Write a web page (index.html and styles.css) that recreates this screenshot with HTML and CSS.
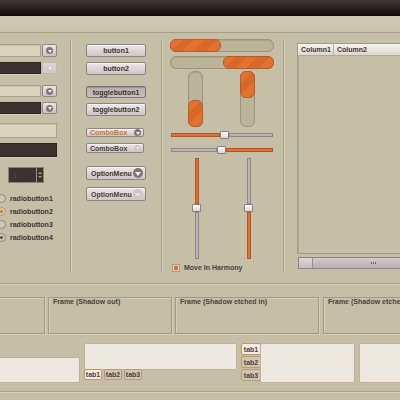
FILE: index.html
```html
<!DOCTYPE html>
<html lang="en">

<head>
    <meta charset="UTF-8">
    <title>Theme Preview</title>
    <link rel="stylesheet" href="styles.css">
</head>

<body>
    <div class="titlebar"></div>
    <div class="toolbar"></div>

    <div class="main">
        <!-- entries, combos, spin, radios -->
        <div class="col col-entries">
            <div class="combo combo-a"><div class="entry"></div><div class="combo-btn"><span class="arrow"></span></div></div>
            <div class="combo combo-b"><div class="entry dark"></div><div class="combo-btn off"><span class="arrow"></span></div></div>
            <div class="combo combo-c"><div class="entry"></div><div class="combo-btn"><span class="arrow"></span></div></div>
            <div class="combo combo-d"><div class="entry dark"></div><div class="combo-btn"><span class="arrow"></span></div></div>
            <div class="entry wide entry-e"></div>
            <div class="entry wide dark entry-f"></div>
            <div class="spin"><span class="spin-val">1</span><span class="spin-arrows"><i class="up"></i><i class="down"></i></span></div>
            <div class="radios">
                <div class="radio"><span class="dot"></span>radiobutton1</div>
                <div class="radio"><span class="dot on"></span>radiobutton2</div>
                <div class="radio"><span class="dot"></span>radiobutton3</div>
                <div class="radio"><span class="dot on dim"></span>radiobutton4</div>
            </div>
        </div>
        <div class="sep"></div>

        <!-- buttons -->
        <div class="col col-buttons">
            <div class="btn b1">button1</div>
            <div class="btn b2">button2</div>
            <div class="btn pressed b3">togglebutton1</div>
            <div class="btn b4">togglebutton2</div>
            <div class="btn combobox cb1"><span class="hot">ComboBox</span><span class="arrow"></span></div>
            <div class="btn combobox cb2"><span>ComboBox</span><span class="arrow off"></span></div>
            <div class="btn optmenu om1"><span>OptionMenu</span><span class="arrow big"></span></div>
            <div class="btn optmenu om2"><span>OptionMenu</span><span class="arrow big off"></span></div>
        </div>
        <div class="sep"></div>

        <!-- progress bars and scales -->
        <div class="col col-ranges">
            <div class="pbar pb1"><div class="fill" style="width: 50%"></div></div>
            <div class="pbar pb2"><div class="fill" style="width: 50%"></div></div>
            <div class="vbars">
                <div class="pbar vertical"><div class="fill" style="height: 50%"></div></div>
                <div class="pbar vertical top"><div class="fill" style="height: 50%"></div></div>
            </div>
            <div class="hscale hs1">
                <div class="track orange" style="width: 49px"></div><div class="knob"></div><div class="track"></div>
            </div>
            <div class="hscale hs2">
                <div class="track" style="width: 46px"></div><div class="knob"></div><div class="track orange"></div>
            </div>
            <div class="vscales">
                <div class="vscale">
                    <div class="track orange" style="height: 46px"></div><div class="knob"></div><div class="track"></div>
                </div>
                <div class="vscale">
                    <div class="track" style="height: 46px"></div><div class="knob"></div><div class="track orange"></div>
                </div>
            </div>
            <div class="check"><span class="box"></span>Move In Harmony</div>
        </div>
        <div class="sep"></div>

        <!-- tree view -->
        <div class="col col-tree">
            <div class="tree">
                <div class="tree-head"><span class="colh c1">Column1</span><span class="colh">Column2</span></div>
            </div>
            <div class="scrollbar"><span class="stepper"></span><span class="slider"><span class="grip"></span></span></div>
        </div>
    </div>

    <div class="hline"></div>

    <div class="frames">
        <div class="frame f1"></div>
        <div class="frame f2"><span class="frame-label">Frame (Shadow out)</span></div>
        <div class="frame f3"><span class="frame-label">Frame (Shadow etched in)</span></div>
        <div class="frame f4"><span class="frame-label">Frame (Shadow etched out)</span></div>
    </div>

    <div class="notebooks">
        <div class="nb nb-top">
            <div class="tabs"></div>
            <div class="page"></div>
        </div>
        <div class="nb nb-bottom">
            <div class="page"></div>
            <div class="tabs"><span class="tab active">tab1</span><span class="tab">tab2</span><span class="tab">tab3</span></div>
        </div>
        <div class="nb nb-left">
            <div class="tabs"><span class="tab active">tab1</span><span class="tab">tab2</span><span class="tab">tab3</span></div>
            <div class="page"></div>
        </div>
        <div class="nb nb-right">
            <div class="page"></div>
        </div>
    </div>

    <div class="hline bottom"></div>
</body>

</html>
```

FILE: styles.css
```css
/* Reset */
* {
    margin: 0;
    padding: 0;
    box-sizing: border-box;
}

body {
    width: 400px;
    height: 400px;
    overflow: hidden;
    background-color: #c6bfa7;
    font-family: 'Liberation Sans', Arial, sans-serif;
    font-size: 7px;
    font-weight: bold;
    color: #3d3434;
    line-height: 1;
}

/* Window title + toolbar band */
.titlebar {
    height: 16px;
    background: linear-gradient(#423935, #0e0a09);
}

.toolbar {
    height: 17px;
    background: linear-gradient(#d0cab4, #c9c3ac);
    border-bottom: 1px solid #a69e83;
}

/* Main four columns */
.main {
    display: flex;
    height: 250px;
}

.col {
    display: flex;
    flex-direction: column;
    overflow: hidden;
}

.sep {
    width: 2px;
    margin: 7px 0 10px;
    border-left: 1px solid #aaa288;
    border-right: 1px solid #d6d0bb;
}

/* Column 1: entries */
.col-entries {
    width: 70px;
    align-items: flex-end;
    padding-right: 13px;
}

.combo {
    display: flex;
    gap: 1px;
    height: 12px;
    margin-top: 5px;
}

.combo-a {
    margin-top: 11px;
    height: 13px;
}

.combo-c {
    margin-top: 11px;
}

.entry {
    width: 90px;
    height: 100%;
    background-color: #dad4be;
    border: 1px solid #a9a188;
    box-shadow: inset 0 1px 0 #c9c2ab;
}

.entry.dark {
    background-color: #3c322f;
    border-color: #2b2320;
    box-shadow: 0 1px 0 #d6d0bb;
}

.entry.wide {
    width: 120px;
}

.entry-e {
    height: 15px;
    margin-top: 9px;
}

.entry-f {
    height: 14px;
    margin-top: 5px;
}

.combo-btn {
    width: 15px;
    height: 100%;
    display: flex;
    align-items: center;
    justify-content: center;
    background: linear-gradient(#ebe6e4, #cbc2c2);
    border: 1px solid #918686;
    border-radius: 2px;
}

.combo-btn.off {
    background: linear-gradient(#dcd6d4, #d0c9c8);
    border-color: #c0b8b6;
}

.combo-btn.off .arrow {
    background-color: #d4c9c8;
}

/* Round arrow glyph */
.arrow {
    width: 7px;
    height: 7px;
    border-radius: 50%;
    background-color: #807575;
    display: flex;
    align-items: center;
    justify-content: center;
    flex-shrink: 0;
}

.arrow::after {
    content: '';
    margin-top: 1px;
    border-left: 2px solid transparent;
    border-right: 2px solid transparent;
    border-top: 3px solid #f4f0ef;
}

.arrow.big {
    width: 10px;
    height: 10px;
}

.arrow.big::after {
    border-left-width: 3px;
    border-right-width: 3px;
    border-top-width: 4px;
}

.arrow.off {
    background-color: #d2c6c5;
}

.arrow.off::after {
    border-top-color: #e6dfde;
}

/* Spin button */
.spin {
    align-self: flex-start;
    display: flex;
    width: 36px;
    height: 16px;
    margin: 10px 0 0 8px;
    background-color: #3c322f;
    border: 1px solid #8b836c;
}

.spin-val {
    flex: 1;
    padding: 4px 0 0 4px;
    color: #5e5450;
    font-weight: normal;
}

.spin-arrows {
    width: 7px;
    display: flex;
    flex-direction: column;
    justify-content: center;
    align-items: center;
    gap: 2px;
    border-left: 1px solid #9a917c;
}

.spin-arrows i {
    border-left: 2px solid transparent;
    border-right: 2px solid transparent;
}

.spin-arrows .up {
    border-bottom: 2px solid #a89f90;
}

.spin-arrows .down {
    border-top: 2px solid #a89f90;
}

/* Radios */
.radios {
    align-self: flex-start;
    margin: 9px 0 0 -3px;
}

.radio {
    display: flex;
    align-items: center;
    gap: 4px;
    height: 13px;
}

.dot {
    width: 9px;
    height: 9px;
    border-radius: 50%;
    border: 1px solid #8f8584;
    background-color: #d0cab4;
    display: flex;
    align-items: center;
    justify-content: center;
}

.dot.on {
    border-color: #c98d63;
}

.dot.on::after {
    content: '';
    width: 3px;
    height: 3px;
    border-radius: 50%;
    background-color: #d8702e;
}

.dot.dim {
    border-color: #8f8584;
}

.dot.dim::after {
    background-color: #564b4a;
}

/* Column 2: buttons */
.col-buttons {
    width: 89px;
    padding-left: 14px;
}

.btn {
    width: 60px;
    height: 13px;
    display: flex;
    align-items: center;
    justify-content: center;
    background: linear-gradient(#ece7e5, #cfc6c6);
    border: 1px solid #8f8484;
    border-radius: 2px;
    box-shadow: inset 0 1px 0 #f7f4f3;
}

.btn.pressed {
    background: linear-gradient(#b9afb0, #c9c0c0);
    border-color: #7d7272;
    box-shadow: inset 0 1px 1px #9a8f90;
}

.b1 { margin-top: 11px; }
.b2 { margin-top: 5px; }
.b3 { margin-top: 11px; height: 12px; }
.b4 { margin-top: 5px; }

.combobox,
.optmenu {
    justify-content: space-between;
    padding: 0 2px 0 3px;
}

.combobox {
    width: 58px;
    height: 10px;
}

.cb1 { margin-top: 12px; height: 9px; }
.cb2 { margin-top: 6px; }

.hot {
    color: #c8733a;
}

.optmenu {
    height: 14px;
    padding-left: 4px;
}

.om1 { margin-top: 13px; }
.om2 { margin-top: 7px; }

.cb2 span:first-child,
.om2 span:first-child {
    color: #4a4040;
}

/* Column 3: progress bars and scales */
.col-ranges {
    width: 120px;
    padding-left: 7px;
}

.pbar {
    display: flex;
    width: 104px;
    height: 13px;
    background-color: #bbb499;
    border: 1px solid #9c957b;
    border-radius: 6px;
    box-shadow: inset 0 1px 1px #a9a288;
}

.pb1 { margin-top: 6px; }
.pb2 { margin-top: 4px; justify-content: flex-end; }

.fill {
    background: repeating-linear-gradient(135deg, #e3722f 0 8px, #d8672a 8px 16px);
    border: 1px solid #b95a27;
    border-radius: 6px;
    margin: -1px;
}

.vbars {
    display: flex;
    gap: 37px;
    margin: 2px 0 0 18px;
}

.pbar.vertical {
    flex-direction: column;
    justify-content: flex-end;
    width: 15px;
    height: 56px;
}

.pbar.vertical.top {
    justify-content: flex-start;
}

.hscale {
    display: flex;
    align-items: center;
    width: 102px;
    height: 9px;
    margin-left: 1px;
}

.hs1 { margin-top: 3px; }
.hs2 { margin-top: 6px; }

.hscale .track {
    height: 4px;
}

.track {
    flex: 1 1 0;
    background-color: #bdb4b6;
    border: 1px solid #8e8587;
}

.hscale .track[style],
.vscale .track[style] {
    flex: none;
}

.track.orange {
    background-color: #e3702e;
    border-color: #b45623;
}

.knob {
    flex: none;
    width: 9px;
    height: 8px;
    background: linear-gradient(#fdfcfc, #d9d4d4);
    border: 1px solid #8a8080;
    border-radius: 1px;
}

.vscales {
    display: flex;
    gap: 43px;
    height: 101px;
    margin: 4px 0 0 22px;
}

.vscale {
    display: flex;
    flex-direction: column;
    align-items: center;
    width: 9px;
}

.vscale .track {
    width: 4px;
}

.check {
    display: flex;
    align-items: center;
    gap: 4px;
    height: 9px;
    margin: 4px 0 0 2px;
    color: #4a4040;
}

.box {
    width: 8px;
    height: 8px;
    border: 1px solid #a89c86;
    background-color: #e06c2b;
    box-shadow: inset 0 0 0 1px #d9cfbc;
}

/* Column 4: tree view */
.col-tree {
    flex: 1;
    padding-left: 12px;
}

.tree {
    width: 120px;
    height: 211px;
    margin-top: 10px;
    border: 1px solid #a39c82;
    box-shadow: inset 1px 1px 0 #b3ac92;
}

.tree-head {
    display: flex;
    height: 12px;
    background: linear-gradient(#f6f3ee, #ddd7cd);
    border-bottom: 1px solid #b1a995;
}

.colh {
    display: flex;
    align-items: center;
    padding-left: 3px;
}

.colh.c1 {
    width: 36px;
    border-right: 1px solid #b5ad9d;
}

.scrollbar {
    display: flex;
    flex: none;
    width: 137px;
    height: 12px;
    margin: 3px 0 0 1px;
    border: 1px solid #8c8385;
    background-color: #b2a7aa;
}

.stepper {
    width: 14px;
    background: linear-gradient(#ddd6d7, #c7bdc0);
    border-right: 1px solid #9a8f92;
}

.slider {
    flex: 1;
    display: flex;
    align-items: center;
    justify-content: center;
    background: linear-gradient(#d4cbcd, #b9aeb1);
}

.grip {
    width: 5px;
    height: 2px;
    background: repeating-linear-gradient(90deg, #6f6567 0 1px, transparent 1px 2px);
}

/* Horizontal separators */
.hline {
    height: 2px;
    border-top: 1px solid #aaa288;
    border-bottom: 1px solid #d6d0bb;
}

.hline.bottom {
    margin-top: 7px;
}

/* Frames */
.frames {
    display: flex;
    height: 37px;
    margin: 12px 0 0 -80px;
}

.frame {
    flex: none;
    height: 37px;
    border: 1px solid #a29b80;
    box-shadow: inset 1px 1px 0 #d5cfba, 1px 1px 0 #d5cfba;
}

.f1 { width: 125px; }
.f2 { width: 124px; margin-left: 3px; }
.f3 { width: 144px; margin-left: 3px; }
.f4 { width: 110px; margin-left: 4px; }

.frame-label {
    display: inline-block;
    margin: -5px 0 0 3px;
    padding: 0 1px;
    line-height: 8px;
    background-color: #c6bfa7;
    color: #4a3f3e;
    white-space: nowrap;
}

/* Notebooks */
.notebooks {
    display: flex;
    align-items: flex-start;
    height: 41px;
    margin-top: 9px;
}

.nb {
    display: flex;
    flex: none;
}

.page {
    background-color: #ede8e0;
    border: 1px solid #c7b194;
    border-radius: 2px;
}

.tabs {
    display: flex;
    gap: 2px;
}

.tab {
    display: flex;
    align-items: center;
    justify-content: center;
    width: 18px;
    height: 11px;
    background-color: #d2c5ae;
    border: 1px solid #b69a7b;
    border-radius: 2px;
    color: #4a3f3e;
}

.tab.active {
    background-color: #f0ebe4;
    border-color: #d48e5b;
}

.nb-top {
    flex-direction: column;
    width: 150px;
    margin-left: -70px;
}

.nb-top .tabs {
    height: 14px;
}

.nb-top .page {
    height: 26px;
}

.nb-bottom {
    flex-direction: column;
    width: 153px;
    margin-left: 4px;
}

.nb-bottom .page {
    height: 27px;
}

.nb-bottom .tabs {
    margin-top: -1px;
}

.nb-left {
    width: 114px;
    margin-left: 4px;
}

.nb-left .tabs {
    flex-direction: column;
    gap: 1px;
}

.nb-left .tab {
    width: 20px;
    height: 12px;
    margin-right: -1px;
}

.nb-left .page {
    flex: 1;
    height: 40px;
}

.nb-right {
    width: 60px;
    margin-left: 4px;
}

.nb-right .page {
    flex: 1;
    height: 40px;
}
```
